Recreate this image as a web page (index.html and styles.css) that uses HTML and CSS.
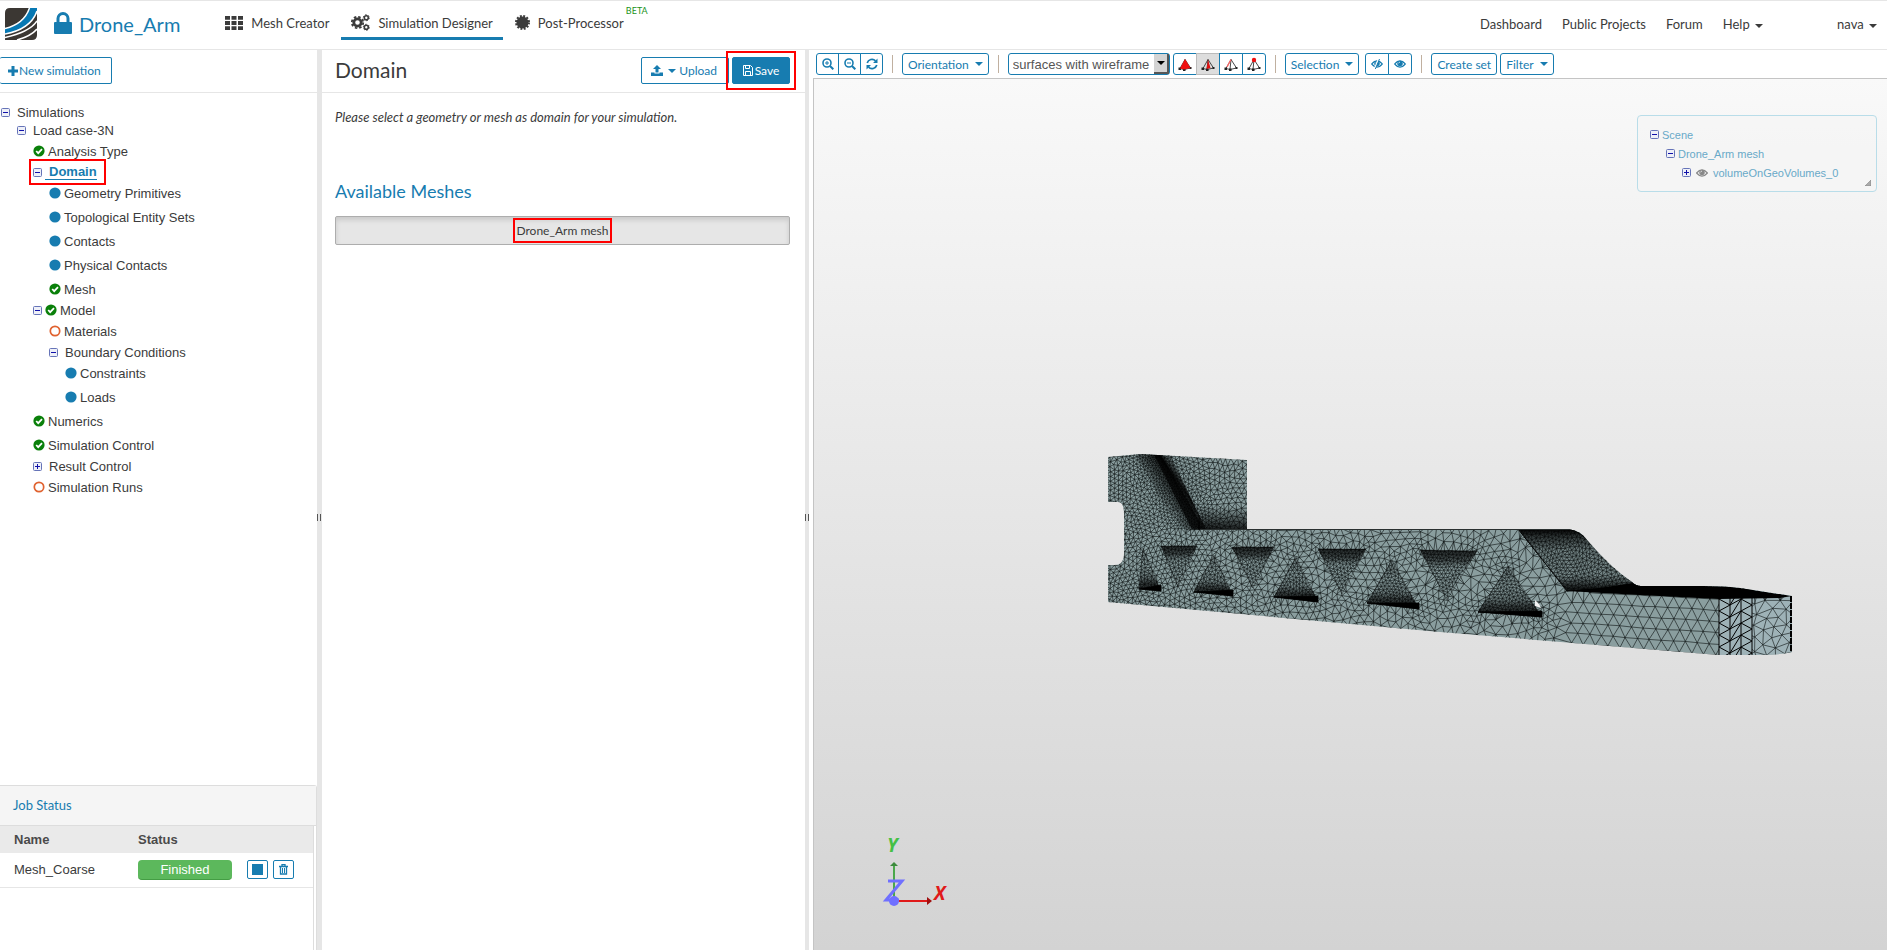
FILE: index.html
```
<!DOCTYPE html>
<html lang="en">
<head>
    <meta charset="UTF-8">
    <meta name="viewport" content="width=device-width, initial-scale=1.0">
    <title>Drone_Arm - Simulation Designer</title>
    <link rel="stylesheet" href="styles.css">
</head>
<body>
    <svg class="sprite" aria-hidden="true">
        <symbol id="i-minus" viewBox="0 0 9 9"><rect x=".5" y=".5" width="8" height="8" rx="1" fill="#eef0f8" stroke="#6674b8"/><path d="M2 4.5h5" stroke="#11a"/></symbol>
        <symbol id="i-plus" viewBox="0 0 9 9"><rect x=".5" y=".5" width="8" height="8" rx="1" fill="#eef0f8" stroke="#6674b8"/><path d="M2 4.5h5M4.5 2v5" stroke="#11a"/></symbol>
        <symbol id="i-check" viewBox="0 0 12 12"><circle cx="6" cy="6" r="5.6" fill="#0a800a"/><path d="M3.2 6l2 2.1L9 4.2" fill="none" stroke="#fff" stroke-width="1.8"/></symbol>
        <symbol id="i-dot" viewBox="0 0 12 12"><circle cx="6" cy="6" r="5.6" fill="#177cb0"/></symbol>
        <symbol id="i-ring" viewBox="0 0 12 12"><circle cx="6" cy="6" r="4.7" fill="none" stroke="#e0622f" stroke-width="1.7"/></symbol>
        <symbol id="i-eye" viewBox="0 0 14 12"><path d="M.5 6Q7-1.500 13.500 6Q7 13.500.5 6z" fill="none" stroke="currentColor" stroke-width="1.400"/><circle cx="7" cy="5.500" r="3.300" fill="currentColor"/><path d="M5.300 5.200q.2-1.500 1.700-1.500" fill="none" stroke="#fff" stroke-width=".8"/></symbol>
        <symbol id="i-tetra" viewBox="0 0 14 14"><path d="M7 2.500L2 11.500L6 12.500L12.500 11zM7 2.500L6 12.500" fill="none" stroke="#333" stroke-width=".9"/><path d="M.5 10.500h2.500v2.500H.5zM5 11.500h2.500V14H5zM11.500 10h2v2h-2z" fill="#222"/></symbol>
    </svg>

    <header class="header">
        <a class="logo" href="#" aria-label="Home">
            <svg width="32" height="32" viewBox="0 0 32 32">
                <defs><clipPath id="logoClip"><path d="M5 0H32V27Q32 32 27 32H0V5Q0 0 5 0z"/></clipPath></defs>
                <g clip-path="url(#logoClip)">
                    <rect width="32" height="32" fill="#3b3733"/>
                    <path d="M24 0Q19 16 0 20.500V26Q27 21 32 3V0z" fill="#0778b3"/>
                    <path d="M24.500 0Q19 16 0 20.500M32 3Q26 21 0 26M32 13Q25 24 0 29.500M32 21Q26 28 12 32" fill="none" stroke="#fff" stroke-width="1.500"/>
                </g>
            </svg>
        </a>
        <a class="project" href="#">
            <svg width="18" height="22" viewBox="0 0 18 22"><path d="M4 11V6.500a5 5 0 0 1 10 0V11" fill="none" stroke="currentColor" stroke-width="3"/><rect y="10" width="18" height="12" rx="1" fill="currentColor"/></svg>
            <span>Drone_Arm</span>
        </a>
        <nav class="tabs">
            <a class="tab" href="#">
                <svg width="18" height="14" viewBox="0 0 18 14" fill="currentColor"><path d="M0 0h5v3.800H0zM6.500 0h5v3.800h-5zM13 0h5v3.800h-5zM0 5.100h5v3.800H0zM6.500 5.100h5v3.800h-5zM13 5.100h5v3.800h-5zM0 10.200h5V14H0zM6.500 10.200h5V14h-5zM13 10.200h5V14h-5z"/></svg>
                Mesh Creator
            </a>
            <a class="tab active" href="#">
                <svg width="19" height="17" viewBox="0 0 19 17" fill="none" stroke="currentColor"><circle cx="6.500" cy="8.500" r="3.700" stroke-width="2.800"/><circle cx="6.500" cy="8.500" r="5.700" stroke-width="1.800" stroke-dasharray="2.500 1.980"/><circle cx="15.300" cy="3.700" r="2" stroke-width="1.600"/><circle cx="15.300" cy="3.700" r="3" stroke-width="1" stroke-dasharray="1.500 1.640"/><circle cx="15.300" cy="13.300" r="2" stroke-width="1.600"/><circle cx="15.300" cy="13.300" r="3" stroke-width="1" stroke-dasharray="1.500 1.640"/></svg>
                Simulation Designer
            </a>
            <a class="tab" href="#">
                <svg width="15" height="15" viewBox="0 0 15 15"><circle cx="7.500" cy="7.500" r="6" fill="currentColor"/><circle cx="7.500" cy="7.500" r="6.500" fill="none" stroke="currentColor" stroke-width="2" stroke-dasharray="1.900 1.500"/></svg>
                Post-Processor
                <span class="beta">BETA</span>
            </a>
        </nav>
        <nav class="links">
            <a href="#">Dashboard</a>
            <a href="#">Public Projects</a>
            <a href="#">Forum</a>
            <a href="#">Help <i class="caret"></i></a>
            <a class="user" href="#">nava <i class="caret"></i></a>
        </nav>
    </header>

    <main class="workspace">
        <aside class="sidebar">
            <div class="panel-bar">
                <button class="btn btn-new"><svg width="10" height="10" viewBox="0 0 10 10"><path d="M5 0v10M0 5h10" stroke="currentColor" stroke-width="3"/></svg>New simulation</button>
            </div>
            <ul class="tree">
                <li><a class="row" href="#"><svg class="toggle"><use href="#i-minus"/></svg><span class="label">Simulations</span></a>
                    <ul>
                        <li><a class="row" href="#"><svg class="toggle"><use href="#i-minus"/></svg><span class="label">Load case-3N</span></a>
                            <ul>
                                <li><a class="row leaf" href="#"><svg class="state"><use href="#i-check"/></svg>Analysis Type</a></li>
                                <li><a class="row current" href="#"><svg class="toggle"><use href="#i-minus"/></svg><span class="label">Domain</span></a>
                                    <ul>
                                        <li><a class="row leaf" href="#"><svg class="state"><use href="#i-dot"/></svg>Geometry Primitives</a></li>
                                        <li><a class="row leaf" href="#"><svg class="state"><use href="#i-dot"/></svg>Topological Entity Sets</a></li>
                                        <li><a class="row leaf" href="#"><svg class="state"><use href="#i-dot"/></svg>Contacts</a></li>
                                        <li><a class="row leaf" href="#"><svg class="state"><use href="#i-dot"/></svg>Physical Contacts</a></li>
                                        <li><a class="row leaf" href="#"><svg class="state"><use href="#i-check"/></svg>Mesh</a></li>
                                    </ul>
                                </li>
                                <li><a class="row" href="#"><svg class="toggle"><use href="#i-minus"/></svg><svg class="state"><use href="#i-check"/></svg>Model</a>
                                    <ul>
                                        <li><a class="row leaf" href="#"><svg class="state"><use href="#i-ring"/></svg>Materials</a></li>
                                        <li><a class="row" href="#"><svg class="toggle"><use href="#i-minus"/></svg><span class="label">Boundary Conditions</span></a>
                                            <ul>
                                                <li><a class="row leaf" href="#"><svg class="state"><use href="#i-dot"/></svg>Constraints</a></li>
                                                <li><a class="row leaf" href="#"><svg class="state"><use href="#i-dot"/></svg>Loads</a></li>
                                            </ul>
                                        </li>
                                    </ul>
                                </li>
                                <li><a class="row leaf" href="#"><svg class="state"><use href="#i-check"/></svg>Numerics</a></li>
                                <li><a class="row leaf" href="#"><svg class="state"><use href="#i-check"/></svg>Simulation Control</a></li>
                                <li><a class="row" href="#"><svg class="toggle"><use href="#i-plus"/></svg><span class="label">Result Control</span></a></li>
                                <li><a class="row leaf" href="#"><svg class="state"><use href="#i-ring"/></svg>Simulation Runs</a></li>
                            </ul>
                        </li>
                    </ul>
                </li>
            </ul>
            <section class="jobs">
                <h2>Job Status</h2>
                <div class="jobs-body">
                    <table>
                        <thead>
                            <tr><th class="col-name">Name</th><th class="col-status">Status</th><th></th></tr>
                        </thead>
                        <tbody>
                            <tr>
                                <td>Mesh_Coarse</td>
                                <td><span class="badge">Finished</span></td>
                                <td>
                                    <div class="actions">
                                        <button aria-label="Stop"><svg width="11" height="11" viewBox="0 0 11 11"><path d="M0 0h11v11H0z" fill="currentColor"/></svg></button>
                                        <button aria-label="Delete"><svg width="9" height="11" viewBox="0 0 9 11" fill="none" stroke="currentColor"><path d="M0 2.500h9M3 2V.5h3V2" stroke-width="1.300"/><path d="M1.500 3v7h6V3" stroke-width="1.300"/><path d="M3.500 4v5M5.500 4v5"/></svg></button>
                                    </div>
                                </td>
                            </tr>
                        </tbody>
                    </table>
                </div>
            </section>
        </aside>

        <div class="splitter"></div>

        <section class="settings">
            <div class="panel-bar">
                <h1>Domain</h1>
                <button class="btn btn-upload"><svg width="12" height="11" viewBox="0 0 12 11" fill="currentColor"><path d="M6 0l4 4H7.500v3.500h-3V4H2zM0 7.500h3.500v1h5v-1H12V11H0z"/></svg><i class="caret"></i> Upload</button>
                <div class="save-box marked">
                    <button class="btn btn-save"><svg width="10" height="11" viewBox="0 0 10 11" fill="none" stroke="currentColor"><path d="M.5.5h7l2 2v8h-9zM2.500.5v3h4v-3M2.500 10.500v-4h5v4"/></svg>Save</button>
                </div>
            </div>
            <div class="settings-body">
                <p class="hint">Please select a geometry or mesh as domain for your simulation.</p>
                <h3>Available Meshes</h3>
                <button class="mesh-btn"><span class="marked">Drone_Arm mesh</span></button>
            </div>
        </section>

        <div class="splitter"></div>

        <section class="viewer">
            <div class="toolbar">
                <div class="group">
                    <button aria-label="Zoom in"><svg width="12" height="12" viewBox="0 0 12 12" fill="none" stroke="currentColor"><circle cx="5" cy="5" r="4" stroke-width="1.600"/><path d="M8 8l3.300 3.300" stroke-width="2"/><path d="M3 5h4M5 3v4"/></svg></button>
                    <button aria-label="Zoom out"><svg width="12" height="12" viewBox="0 0 12 12" fill="none" stroke="currentColor"><circle cx="5" cy="5" r="4" stroke-width="1.600"/><path d="M8 8l3.300 3.300" stroke-width="2"/><path d="M3 5h4"/></svg></button>
                    <button aria-label="Refresh"><svg width="12" height="12" viewBox="0 0 12 12"><path d="M1.200 5A5 5 0 0 1 9.500 2.800M10.800 7A5 5 0 0 1 2.500 9.200" fill="none" stroke="currentColor" stroke-width="1.700"/><path d="M11.500.5V5H7zM.5 11.500V7H5z" fill="currentColor"/></svg></button>
                </div>
                <i class="divider"></i>
                <button class="tool">Orientation <i class="caret"></i></button>
                <i class="divider"></i>
                <div class="select-wrap">
                    <select aria-label="Render mode"><option>surfaces with wireframe</option></select>
                    <span class="select-arrow"></span>
                </div>
                <div class="group picks">
                    <button aria-label="Pick volumes"><svg width="14" height="14" viewBox="0 0 14 14"><use href="#i-tetra"/><path d="M7 2L2 11.500L6 12.500L12.500 11z" fill="#f01010"/></svg></button>
                    <button class="pressed" aria-label="Pick faces"><svg width="14" height="14" viewBox="0 0 14 14"><use href="#i-tetra"/><path d="M7 2.500L5.500 12L9.500 11z" fill="#e01010"/></svg></button>
                    <button aria-label="Pick edges"><svg width="14" height="14" viewBox="0 0 14 14"><use href="#i-tetra"/><path d="M7 2.500L3 10" stroke="#f66" stroke-width="1.300"/></svg></button>
                    <button aria-label="Pick nodes"><svg width="14" height="14" viewBox="0 0 14 14"><use href="#i-tetra"/><circle cx="7" cy="3" r="2.200" fill="#f01010"/></svg></button>
                </div>
                <i class="divider"></i>
                <button class="tool">Selection <i class="caret"></i></button>
                <div class="group eyes">
                    <button aria-label="Hide"><svg width="12" height="10" viewBox="0 0 14 12"><use href="#i-eye"/><path d="M4 12L9 0" stroke="#fff" stroke-width="2"/><path d="M5 12L10 0" stroke="currentColor" stroke-width="1.200"/></svg></button>
                    <button aria-label="Show"><svg width="12" height="10" viewBox="0 0 14 12"><use href="#i-eye"/></svg></button>
                </div>
                <i class="divider"></i>
                <button class="tool tight">Create set</button>
                <button class="tool">Filter <i class="caret"></i></button>
            </div>

            <div class="scene">
                <svg class="model" viewBox="814 79 1073 871" preserveAspectRatio="xMidYMid meet">
                    <defs>
                        <clipPath id="bodyClip"><path d="M1108 457L1140 454L1247 460V529.500H1570Q1580 530 1588 541Q1611 568 1632 582Q1636 586 1641 586H1703Q1728 586 1740 588L1792 596V652Q1780 655 1753 655H1719L1440 632L1108 602V565H1115Q1124 565 1124 553V514Q1124 502 1118 502H1108z"/></clipPath>
                        <linearGradient id="fold" gradientUnits="userSpaceOnUse" x1="1158" y1="500" x2="1192" y2="476"><stop offset="0" stop-opacity="0"/><stop offset=".45" stop-opacity=".55"/><stop offset=".65" stop-opacity=".9"/><stop offset=".75" stop-opacity=".5"/><stop offset="1" stop-opacity="0"/></linearGradient>
                        <linearGradient id="fadeDown" x2="0" y2="1"><stop offset="0" stop-opacity="0"/><stop offset="1" stop-opacity=".8"/></linearGradient>
                        <linearGradient id="pocketDown" x2="0" y2="1"><stop offset="0" stop-opacity=".75"/><stop offset=".2" stop-opacity=".5"/><stop offset=".35" stop-opacity=".05"/><stop offset="1" stop-opacity=".1"/></linearGradient>
                        <linearGradient id="pocketUp" x2="0" y2="1"><stop offset="0" stop-opacity=".3"/><stop offset=".4" stop-opacity=".05"/><stop offset=".65" stop-opacity=".2"/><stop offset=".8" stop-opacity=".6"/><stop offset="1" stop-opacity=".8"/></linearGradient>
                        <linearGradient id="slope" gradientUnits="userSpaceOnUse" x1="0" y1="529" x2="0" y2="591"><stop offset="0" stop-opacity="1"/><stop offset=".12" stop-opacity=".65"/><stop offset=".35" stop-opacity=".2"/><stop offset=".75" stop-opacity=".15"/><stop offset=".95" stop-opacity=".8"/></linearGradient>
                    </defs>
                    <g clip-path="url(#bodyClip)">
                        <path d="M1100 450H1800V660H1100z" fill="#8a9e9f"/>
                        <path d="M1719 590H1800V660H1719z" fill="#9eb2b7"/>
                        <path id="wire" fill="none" stroke="#0b1010" stroke-width=".6"/>
                        <path d="M1719 590H1752V660H1719z" fill="#9eb2b7"/>
                        <path d="M1134 450H1168L1206 529.500H1186Q1176 524 1160 500z" fill="url(#fold)"/>
                        <path d="M1154 455H1161L1200 522V529.500H1192z" fill-opacity=".7"/>
                        <path d="M1198 506H1247V529.500H1198z" fill="url(#fadeDown)"/>
                        <g id="pockets" stroke="#000" stroke-width=".8"></g>
                        <path d="M1518 529L1572 529Q1600 545 1640 586L1567 591z" fill="url(#slope)" stroke="#000"/>
                        <path d="M1566 591L1600 588L1633 583L1641 586H1703Q1728 586 1740 588L1792 596L1780 598L1719 599L1640 595z"/>
                        <path d="M1535 600L1535 606L1541 608L1539 604z" fill="#f4f4f4"/>
                        <path id="tip" fill="none" stroke="#000" stroke-width="1"/>
                        <path d="M1791 596V652" stroke="#000" stroke-width="2" stroke-dasharray="6 1"/>
                    </g>
                    <path d="M1200 529.500H1570" stroke="#2a3030"/>
                    <g class="axes">
                        <path d="M894 900V865" stroke="#4aa84a" stroke-width="2"/>
                        <path d="M894 862l4 4h-8z" fill="#3c8a3c"/>
                        <path d="M894 901H930" stroke="#e01a1a" stroke-width="2"/>
                        <path d="M932 901l-5-4v8z" fill="#a01010"/>
                        <circle cx="894" cy="901" r="5" fill="#7070ff"/>
                        <text x="887" y="852" fill="#45c045">Y</text>
                        <text x="934" y="900" fill="#e01a1a">X</text>
                        <path d="M888 881h14l-16 19h13" fill="none" stroke="#7070ff" stroke-width="3"/>
                    </g>
                </svg>

                <div class="outliner">
                    <ul>
                        <li><a href="#"><svg class="toggle"><use href="#i-minus"/></svg>Scene</a>
                            <ul>
                                <li><a href="#"><svg class="toggle"><use href="#i-minus"/></svg>Drone_Arm mesh</a>
                                    <ul>
                                        <li><a href="#"><svg class="toggle"><use href="#i-plus"/></svg><svg class="eye" width="12" height="10"><use href="#i-eye"/></svg>volumeOnGeoVolumes_0</a></li>
                                    </ul>
                                </li>
                            </ul>
                        </li>
                    </ul>
                    <svg class="grip" width="6" height="6" viewBox="0 0 6 6"><path d="M6 0v6H0z" fill="#aaa" stroke="#777" stroke-width=".5"/></svg>
                </div>
            </div>
        </section>
    </main>
    <script src="mesh.js"></script>
</body>
</html>
```
FILE: styles.css
```
:root {
    --blue: #177cb0;
    --text: #3b3b3b;
    --line: #e6e6e6;
    --lato: Lato, "Open Sans", sans-serif;
    --sans: "Liberation Sans", Arial, sans-serif;
}

* {
    box-sizing: border-box;
}

body {
    margin: 0;
    height: 100vh;
    display: flex;
    flex-direction: column;
    font-family: var(--lato);
    font-size: 13px;
    color: var(--text);
    background-color: #fff;
    overflow: hidden;
}

a {
    color: inherit;
    text-decoration: none;
}

ul {
    list-style: none;
    margin: 0;
    padding: 0;
}

svg {
    flex: none;
}

button {
    font-family: var(--lato);
    font-size: 12px;
    cursor: pointer;
}

.sprite {
    position: absolute;
    width: 0;
    height: 0;
}

.caret {
    display: inline-block;
    border: 4px solid transparent;
    border-top-color: currentColor;
    border-bottom: 0;
    vertical-align: middle;
    margin-left: 2px;
}

.marked {
    outline: 2px solid #f00;
}

/* header */
.header {
    display: flex;
    align-items: center;
    height: 50px;
    flex: none;
    padding: 0 10px 2px 5px;
    border-top: 1px solid var(--line);
    border-bottom: 1px solid var(--line);
}

.logo {
    display: flex;
}

.project {
    display: flex;
    align-items: center;
    gap: 7px;
    margin-left: 17px;
    font-size: 20px;
    color: var(--blue);
}

.project svg {
    margin-bottom: 2px;
}

.tabs {
    display: flex;
    gap: 2px;
    margin-left: 35px;
}

.tab {
    display: flex;
    align-items: center;
    gap: 8px;
    height: 32px;
    padding: 0 10px;
    position: relative;
    border-bottom: 3px solid transparent;
}

.tab.active {
    border-bottom-color: var(--blue);
}

.beta {
    position: absolute;
    top: -3px;
    left: 121px;
    font-size: 9px;
    line-height: 12px;
    color: #1c931c;
}

.links {
    display: flex;
    gap: 20px;
    margin-left: auto;
}

.user {
    margin-left: 54px;
}

/* panels */
.workspace {
    flex: 1;
    min-height: 0;
    display: grid;
    grid-template-columns: minmax(0, 317fr) 4px minmax(0, 484fr) 4px minmax(0, 1078fr);
}

.splitter {
    display: flex;
    align-items: center;
    justify-content: center;
    padding-top: 34px;
    background-color: var(--line);
}

.splitter::before {
    content: "";
    width: 3px;
    height: 7px;
    border: solid #555;
    border-width: 0 1px;
}

.panel-bar {
    display: flex;
    align-items: center;
    height: 43px;
    flex: none;
    padding-bottom: 1px;
    border-bottom: 1px solid var(--line);
}

.btn {
    display: flex;
    align-items: center;
    height: 27px;
    border: 1px solid var(--blue);
    border-radius: 2px;
    background-color: #fff;
    color: var(--blue);
}

.btn-new {
    border-left: 0;
    padding: 0 10px 0 8px;
    gap: 1px;
}

.sidebar {
    display: flex;
    flex-direction: column;
    font-family: var(--sans);
    font-size: 13px;
}

.tree {
    flex: 1;
    padding: 10px 0 0 1px;
}

.tree ul {
    padding-left: 16px;
}

.row {
    display: flex;
    align-items: center;
    width: max-content;
    height: 18px;
    gap: 3px;
}

.leaf {
    height: 24px;
}

.toggle {
    width: 9px;
    height: 9px;
}

.state {
    width: 12px;
    height: 12px;
}

.label {
    padding-left: 4px;
}

.current {
    color: var(--blue);
    font-weight: bold;
    outline: 2px solid #f00;
    outline-offset: 2px;
    padding-right: 5px;
}

.current .label {
    border-bottom: 1px solid var(--blue);
    line-height: 15px;
}

/* job list */
.jobs {
    height: 165px;
    display: flex;
    flex-direction: column;
    border: 1px solid #ddd;
    border-width: 1px 1px 0 0;
    border-radius: 0 3px 0 0;
}

.jobs h2 {
    margin: 0;
    padding-left: 13px;
    font: 13px/39px var(--lato);
    color: var(--blue);
    background-color: #f5f5f5;
    border-bottom: 1px solid #ddd;
}

.jobs-body {
    flex: 1;
    margin-right: 2px;
    border-right: 1px solid #ddd;
}

.jobs table {
    width: 100%;
    border-collapse: collapse;
    table-layout: fixed;
}

.jobs th {
    height: 27px;
    padding: 0 0 1px 14px;
    text-align: left;
    color: #4a4a4a;
    background-color: #eaeaea;
}

.jobs td {
    height: 34px;
    padding: 0 0 0 14px;
    border-bottom: 1px solid var(--line);
}

.jobs th + th,
.jobs td + td {
    padding-left: 0;
}

.col-name {
    width: 138px;
}

.col-status {
    width: 109px;
}

.badge {
    display: block;
    width: 94px;
    height: 20px;
    line-height: 19px;
    text-align: center;
    color: #fff;
    background-color: #5cb85c;
    border-bottom: 1px solid #449d44;
    border-radius: 4px;
}

.actions {
    display: flex;
    gap: 5px;
}

.actions button {
    display: flex;
    align-items: center;
    justify-content: center;
    width: 21px;
    height: 19px;
    padding: 0;
    color: var(--blue);
    background-color: #fff;
    border: 1px solid var(--blue);
    border-radius: 2px;
}

/* domain settings */
.settings {
    border-left: 1px solid var(--line);
}

.settings .panel-bar {
    padding-left: 13px;
    padding-right: 15px;
}

.settings h1 {
    margin: 0 auto 0 0;
    padding-bottom: 2px;
    font-size: 21px;
    font-weight: normal;
}

.btn-upload {
    padding: 0 11px 0 9px;
    gap: 3px;
}

.save-box {
    margin-left: 3px;
    outline-offset: 4px;
}

.btn-save {
    justify-content: center;
    width: 58px;
    padding: 0;
    gap: 2px;
    color: #fff;
    background-color: var(--blue);
}

.settings-body {
    padding: 14px 15px 0 13px;
}

.hint {
    margin: 0 0 52px;
    line-height: 20px;
    font-style: italic;
}

.settings h3 {
    margin: 0 0 13px;
    font-size: 18px;
    line-height: 24px;
    font-weight: normal;
    color: var(--blue);
}

.mesh-btn {
    display: flex;
    align-items: center;
    justify-content: center;
    width: 100%;
    height: 29px;
    color: var(--text);
    background-color: #e6e6e6;
    border: 1px solid #adadad;
    border-radius: 2px;
    box-shadow: inset 0 3px 5px rgba(0, 0, 0, 0.125);
}

.mesh-btn .marked {
    line-height: 21px;
    padding: 0 2px;
}

/* 3d viewer */
.viewer {
    display: flex;
    flex-direction: column;
    padding-left: 4px;
}

.toolbar {
    display: flex;
    align-items: center;
    height: 28px;
    flex: none;
    padding-left: 3px;
}

.group {
    display: flex;
}

.group button,
.tool {
    display: flex;
    align-items: center;
    justify-content: center;
    height: 22px;
    color: var(--blue);
    background-color: #fff;
    border: 1px solid var(--blue);
    border-radius: 3px;
}

.group button {
    width: 23px;
    padding: 0;
    border-radius: 0;
}

.group button + button {
    margin-left: -1px;
}

.group button:first-child {
    border-radius: 3px 0 0 3px;
}

.group button:last-child {
    border-radius: 0 3px 3px 0;
}

.picks {
    margin-left: 3px;
}

.picks button,
.eyes button {
    width: 24px;
}

.group .pressed {
    background-color: #ddd;
    border-color: #bbb;
}

.tool {
    padding: 0 5px;
    gap: 4px;
}

.tool.tight {
    margin-right: 3px;
}

.tool + .group {
    margin-left: 6px;
}

.divider {
    width: 1px;
    height: 18px;
    margin: 0 9px;
    background-color: #c0b0a0;
}

.select-wrap {
    position: relative;
    height: 22px;
}

.select-wrap select {
    appearance: none;
    width: 162px;
    height: 22px;
    padding: 0 18px 0 4px;
    font-family: var(--sans);
    font-size: 13px;
    color: #555;
    background-color: #fff;
    border: 1px solid var(--blue);
    border-radius: 3px;
}

.select-arrow {
    position: absolute;
    top: 1px;
    right: 1px;
    width: 15px;
    height: 20px;
    padding: 7px 3px;
    background-color: #d4d4d4;
    border: 1px outset #aaa;
    border-width: 0 2px 2px 0;
    pointer-events: none;
}

.select-arrow::before {
    content: "";
    display: block;
    width: 0;
    border: 4px solid transparent;
    border-top-color: #000;
    border-bottom: 0;
}

.scene {
    flex: 1;
    min-height: 0;
    position: relative;
    border: 1px solid #c4c4c4;
    border-width: 1px 0 0 1px;
    background: linear-gradient(#f9f9f9, #d3d3d3);
}

.model {
    display: block;
    width: 100%;
    height: 100%;
}

.axes text {
    font: italic bold 19px "Open Sans", sans-serif;
}

.outliner {
    position: absolute;
    top: 36px;
    right: 10px;
    width: 240px;
    padding: 9px 12px;
    font-family: var(--sans);
    font-size: 11px;
    color: #68a9c8;
    background-color: rgba(245, 245, 245, 0.7);
    border: 1px solid #b9dde9;
    border-radius: 4px;
}

.outliner ul ul {
    padding-left: 16px;
}

.outliner a {
    display: flex;
    align-items: center;
    height: 19px;
    gap: 3px;
}

.eye {
    color: #888;
    margin: 0 2px;
}

.grip {
    position: absolute;
    right: 5px;
    bottom: 5px;
}
```
FILE: mesh.js
```
// pockets of the truss: [left x, left y, right x, right y, apex x, apex y]
const pockets = [
    [1161, 546, 1197, 546, 1178, 587],
    [1232, 547, 1274, 547, 1253, 588],
    [1318, 549, 1366, 549, 1342, 594],
    [1420, 550, 1477, 551, 1447, 600],
    [1139, 589, 1161, 591, 1143, 548],
    [1194, 592, 1233, 596, 1214, 555],
    [1274, 597, 1318, 602, 1296, 557],
    [1367, 603, 1419, 609, 1392, 560],
    [1478, 612, 1542, 617, 1508, 566]
];

function distToSegment(px, py, ax, ay, bx, by) {
    const dx = bx - ax, dy = by - ay;
    const t = Math.max(0, Math.min(1, ((px - ax) * dx + (py - ay) * dy) / (dx * dx + dy * dy)));
    return Math.hypot(px - ax - t * dx, py - ay - t * dy);
}

function inside(x, y, p) {
    const s = (ax, ay, bx, by) => (bx - ax) * (y - ay) - (by - ay) * (x - ax) > 0;
    const a = s(p[0], p[1], p[2], p[3]), b = s(p[2], p[3], p[4], p[5]), c = s(p[4], p[5], p[0], p[1]);
    return a === b && b === c;
}

// target edge length at a point
function spacing(x, y) {
    let h = x < 1250 ? 3.8 + (x - 1108) / 60 : Math.min(10.5, 6.2 + (x - 1250) / 75);
    if (y < 530 && x < 1250) {
        const d = distToSegment(x, y, 1150, 455, 1196, 529);
        h = Math.min(x > 1180 ? 5 : 4, 2 + d / 14);
    }
    // curved ramp behind the last rib
    const ramp = 1518 + (y - 529) * 0.8;
    if (x > ramp && y < 590) return 3.5;
    for (const p of pockets) {
        if (inside(x, y, p)) return 3.2;
        for (let i = 0; i < 6; i += 2) {
            h = Math.min(h, 4 + Math.hypot(x - p[i], y - p[i + 1]) / 5);
        }
    }
    return h;
}

let seed = 7;
function random() {
    seed = (seed * 16807) % 2147483647;
    return seed / 2147483647;
}

function samplePoints() {
    const points = [], cells = {};
    // even rows along the straight end of the arm
    for (let k = 0; k <= 5; k++) {
        for (let x = 1565 + (k % 2) * 6; x < 1722; x += 12) {
            const top = 591 + (x - 1566) * 0.05, bottom = 642 + (x - 1560) * 0.082;
            points.push([x + random(), top + (bottom - top) * k / 5 + random()]);
        }
    }
    for (let cx = 1102; cx < 1800; cx += 1) {
        for (let cy = 448; cy < 662; cy += 1) {
            if (cx > 1250 && cy < 525) continue;
            if (cx > 1560 && cx < 1725 && cy > 588) continue;
            const x = cx + random() * 0.9, y = cy + random() * 0.9, h = spacing(x, y);
            const gx = Math.floor(x / 12), gy = Math.floor(y / 12);
            let free = true;
            for (let i = gx - 1; free && i <= gx + 1; i++) {
                for (let j = gy - 1; free && j <= gy + 1; j++) {
                    free = !(cells[i + ',' + j] || []).some(q => Math.hypot(q[0] - x, q[1] - y) < h);
                }
            }
            if (!free) continue;
            points.push([x, y]);
            (cells[gx + ',' + gy] = cells[gx + ',' + gy] || []).push([x, y]);
        }
    }
    return points.sort((a, b) => a[0] - b[0]);
}

function circle(pts, i, j, k) {
    const [ax, ay] = pts[i], [bx, by] = pts[j], [cx, cy] = pts[k];
    const d = 2 * ((bx - ax) * (cy - ay) - (by - ay) * (cx - ax)) || 1e-9;
    const b2 = (bx - ax) ** 2 + (by - ay) ** 2, c2 = (cx - ax) ** 2 + (cy - ay) ** 2;
    const ux = ((cy - ay) * b2 - (by - ay) * c2) / d, uy = ((bx - ax) * c2 - (cx - ax) * b2) / d;
    return { v: [i, j, k], x: ax + ux, y: ay + uy, r2: ux * ux + uy * uy };
}

// sweep from left to right, closing triangles whose circle lies behind the point
function triangulate(points) {
    const n = points.length, pts = points.concat([[-9000, -5000], [12000, -5000], [1400, 15000]]);
    let open = [circle(pts, n, n + 1, n + 2)];
    const done = [];
    for (let i = 0; i < n; i++) {
        const [x, y] = pts[i], edges = new Map(), keep = [];
        for (const t of open) {
            const dx = x - t.x, dy = y - t.y;
            if (dx > 0 && dx * dx > t.r2) {
                done.push(t);
            } else if (dx * dx + dy * dy < t.r2) {
                [[0, 1], [1, 2], [2, 0]].forEach(([a, b]) => {
                    const e = [t.v[a], t.v[b]].sort((m, o) => m - o), key = e.join();
                    if (edges.has(key)) edges.delete(key); else edges.set(key, e);
                });
            } else {
                keep.push(t);
            }
        }
        edges.forEach(e => keep.push(circle(pts, e[0], e[1], i)));
        open = keep;
    }
    return done.concat(open).filter(t => Math.max(...t.v) < n);
}

function drawWire() {
    const pts = samplePoints(), seen = new Set();
    let d = '';
    triangulate(pts).forEach(t => {
        [[0, 1], [1, 2], [2, 0]].forEach(([a, b]) => {
            const i = Math.min(t.v[a], t.v[b]), j = Math.max(t.v[a], t.v[b]), key = i + ',' + j;
            if (seen.has(key)) return;
            seen.add(key);
            d += `M${pts[i][0].toFixed(1)} ${pts[i][1].toFixed(1)}L${pts[j][0].toFixed(1)} ${pts[j][1].toFixed(1)}`;
        });
    });
    document.getElementById('wire').setAttribute('d', d);
}

function drawPockets() {
    document.getElementById('pockets').innerHTML = pockets.map(p => {
        const up = p[5] < p[1];
        const face = `<path d="M${p[0]} ${p[1]}L${p[2]} ${p[3]}L${p[4]} ${p[5]}z" fill="url(#${up ? 'pocketUp' : 'pocketDown'})" stroke-opacity=".4"/>`;
        const floor = up ? `<path d="M${p[0]} ${p[1]}L${p[2]} ${p[3] - 6}V${p[3]}z"/>` : '';
        return face + floor;
    }).join('');
}

// coarse columns at the rounded tip, diagonals alternate left and right
function drawTip() {
    const cols = [1719, 1730, 1741, 1752];
    let d = '';
    cols.forEach((x, i) => {
        d += `M${x} 598V656`;
        if (i === 3) return;
        const next = cols[i + 1], from = i % 2 ? 605 : 599, to = i % 2 ? 599 : 605;
        for (let r = -1; r < 6; r++) {
            const a = from + r * 12, b = to + r * 12;
            d += `M${x} ${a}L${next} ${b}L${x} ${a + 12}`;
        }
    });
    document.getElementById('tip').setAttribute('d', d);
}

drawWire();
drawPockets();
drawTip();
```
